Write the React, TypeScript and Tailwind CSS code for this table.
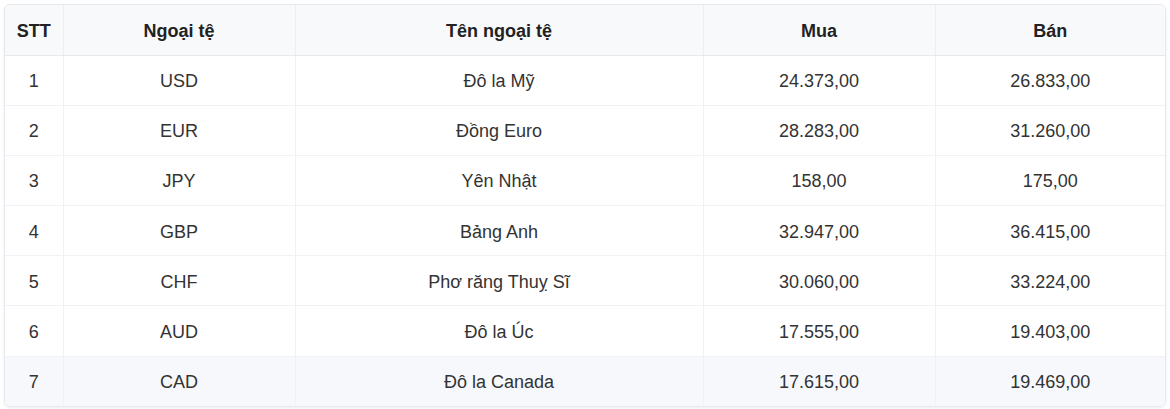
const rows = [
  ["1", "USD", "Đô la Mỹ", "24.373,00", "26.833,00"],
  ["2", "EUR", "Đồng Euro", "28.283,00", "31.260,00"],
  ["3", "JPY", "Yên Nhật", "158,00", "175,00"],
  ["4", "GBP", "Bảng Anh", "32.947,00", "36.415,00"],
  ["5", "CHF", "Phơ răng Thuy\u0323 Sĩ", "30.060,00", "33.224,00"],
  ["6", "AUD", "Đô la Úc", "17.555,00", "19.403,00"],
  ["7", "CAD", "Đô la Canada", "17.615,00", "19.469,00"],
];

const headers = ["STT", "Ngoại tệ", "Tên ngoại tệ", "Mua", "Bán"];

export default function App() {
  return (
    <div className="bg-white p-1 w-[1170px] h-[409px]" style={{ fontFamily: "'Liberation Sans', Arial, sans-serif" }}>
      <div className="overflow-hidden rounded-md border border-[#e6e9ee] shadow-[0_1px_3px_rgba(0,0,0,0.08)]">
        <table className="w-full table-fixed border-collapse text-[18px] text-[#333]">
          <colgroup>
            <col className="w-[58px]" />
            <col className="w-[232px]" />
            <col className="w-[408px]" />
            <col className="w-[232px]" />
            <col />
          </colgroup>
          <thead>
            <tr className="h-[50px] bg-[#f8f9fb]">
              {headers.map((h, i) => (
                <th
                  key={h}
                  className={`pt-[3px] text-center font-bold text-[#222] border-b border-[#e6e9ee] ${i > 0 ? "border-l border-l-[#eceef2]" : ""}`}
                >
                  {h}
                </th>
              ))}
            </tr>
          </thead>
          <tbody>
            {rows.map((r, ri) => (
              <tr
                key={r[0]}
                className={`h-[50.2px] ${ri === rows.length - 1 ? "bg-[#f6f8fb]" : "bg-white border-b border-[#f1f2f5]"}`}
              >
                {r.map((c, i) => (
                  <td key={i} className={`pt-[3px] text-center ${i > 0 ? "border-l border-l-[#f0f1f4]" : ""}`}>
                    {c}
                  </td>
                ))}
              </tr>
            ))}
          </tbody>
        </table>
      </div>
    </div>
  );
}
